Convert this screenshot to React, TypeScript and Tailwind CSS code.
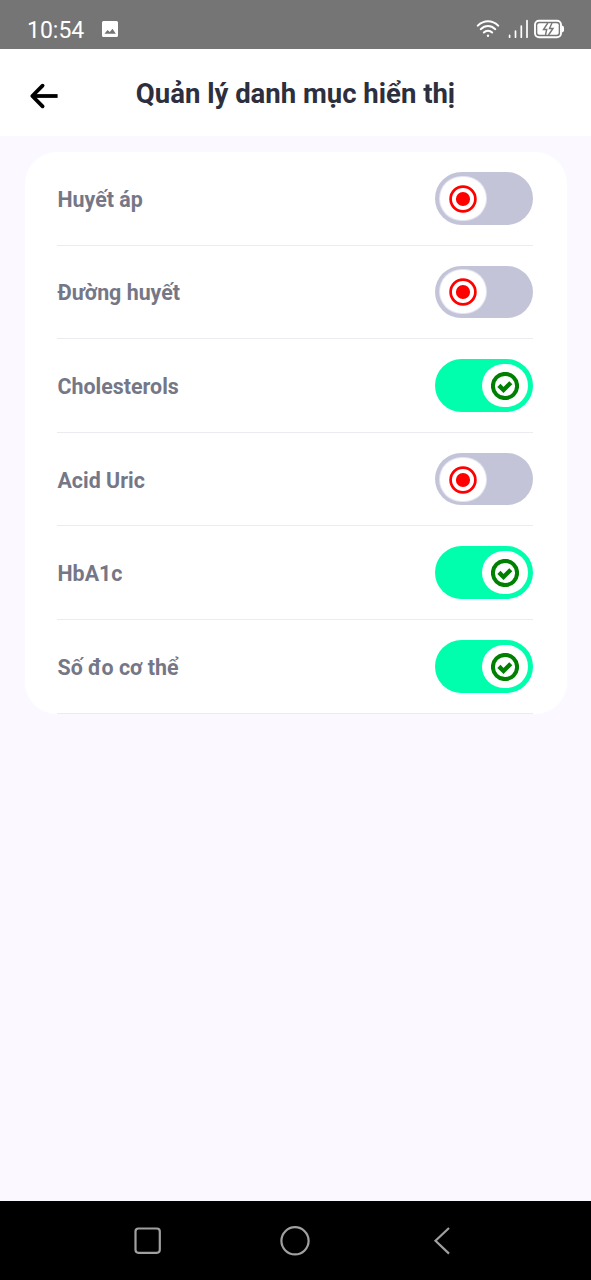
import { useState } from "react";

const initialItems = [
  { label: "Huyết áp", on: false },
  { label: "Đường huyết", on: false },
  { label: "Cholesterols", on: true },
  { label: "Acid Uric", on: false },
  { label: "HbA1c", on: true },
  { label: "Số đo cơ thể", on: true },
];

function StatusBar() {
  return (
    <div className="flex h-[49px] shrink-0 items-center justify-between bg-[#757575] pt-[9px] pr-[26px] pl-[27px] text-white">
      <div className="flex items-center gap-[18px]">
        <span className="mt-[3px] text-[23px] leading-[28px]">10:54</span>
        <svg className="h-[16px] w-[16px]" viewBox="0 0 16 16">
          <path
            fill="currentColor"
            fillRule="evenodd"
            d="M1.5 0h13Q16 0 16 1.5v13q0 1.500-1.500 1.500h-13Q0 16 0 14.500v-13Q0 0 1.500 0ZM2.500 12.800h11.300L10.500 7.700 7.800 11 5.500 9Z"
          />
        </svg>
      </div>
      <div className="flex items-center">
        <svg className="h-[20px] w-[24px]" viewBox="0 0 24 20" fill="none" stroke="currentColor" strokeWidth="1.900" strokeLinecap="round">
          <path d="M1.700 6.700Q6.500 2.300 12 2.300T22.300 6.700M4.700 10.200Q8 7 12 7T19.300 10.200M7.800 13.500Q9.600 11.700 12 11.700T16.200 13.500" />
          <circle cx="12" cy="16.700" r="1.200" fill="currentColor" stroke="none" />
        </svg>
        <svg className="ml-[8px] h-[20px] w-[20px]" viewBox="0 0 20 20" fill="none" stroke="currentColor" strokeWidth="1.700" strokeLinecap="round">
          <path d="M1.600 16.400v1.800M7.500 12v6.200M13.300 7v11.200M19 1.500v16.700" />
        </svg>
        <svg className="ml-[6px] h-[20px] w-[31px]" viewBox="0 0 31 20" fill="none">
          <rect x="1" y="1.800" width="26" height="16.400" rx="4" stroke="currentColor" strokeWidth="1.900" />
          <rect x="3.300" y="4.200" width="21.400" height="11.600" rx="2" fill="currentColor" />
          <path d="M28 6.500q2 .5 2 2v3q0 1.500-2 2Z" fill="currentColor" />
          <path d="M13.800 4 9.500 10.500h3.200L11.500 16M18 4l-2.500 5.500h3.500L14.500 16" stroke="#757575" strokeWidth="1.400" />
        </svg>
      </div>
    </div>
  );
}

function Header() {
  return (
    <header className="grid h-[87px] shrink-0 grid-cols-[1fr_auto_1fr] items-center bg-white">
      <button aria-label="Back" className="ml-[29px] mt-[7px] w-[30px]">
        <svg
          className="block h-[26px] w-[30px]"
          viewBox="0 0 30 26"
          fill="none"
          stroke="#000"
          strokeWidth="3.800"
          strokeLinejoin="round"
        >
          <path d="M28.600 13H4" />
          <path d="M13.600 2.700 3.300 13l10.300 10.300" strokeLinecap="round" />
        </svg>
      </button>
      <h1 className="mt-[3px] text-[27.500px] leading-[36px] font-bold whitespace-nowrap text-[#2d2f3e]">Quản lý danh mục hiển thị</h1>
    </header>
  );
}

function Toggle({ on, label, onClick }: { on: boolean; label: string; onClick: () => void }) {
  return (
    <button
      role="switch"
      aria-checked={on}
      aria-label={label}
      onClick={onClick}
      className={
        on
          ? "flex h-[52.500px] w-[98.300px] items-center justify-end rounded-full bg-[#00ffad] px-[5px]"
          : "flex h-[52.500px] w-[98.300px] items-center justify-start rounded-full bg-[#c4c4d8] px-[5px]"
      }
    >
      <span
        className={
          on
            ? "flex h-[43px] w-[46px] items-center justify-center rounded-full bg-white pt-[1px]"
            : "flex h-[43px] w-[46px] items-center justify-center rounded-full bg-white pt-[1px] shadow-[0_0_0_1px_#e4e4f4]"
        }
      >
        {on ? (
          <svg className="h-[28px] w-[28px]" viewBox="0 0 28 28" fill="none" stroke="#008000">
            <circle cx="14" cy="14" r="12.100" strokeWidth="4" />
            <path d="M7.900 13.400 12.500 18 19.800 10.700" strokeWidth="4.400" />
          </svg>
        ) : (
          <svg className="h-[28px] w-[28px]" viewBox="0 0 28 28">
            <circle cx="14" cy="14" r="12.400" fill="none" stroke="#ff0000" strokeWidth="2.700" />
            <circle cx="14" cy="14" r="7.100" fill="#ff0000" />
          </svg>
        )}
      </span>
    </button>
  );
}

function NavBar() {
  return (
    <nav className="flex h-[79px] shrink-0 items-center justify-center gap-[117px] bg-black pr-[2px] text-[#a0a0a0]">
      <svg className="h-[30px] w-[30px]" viewBox="0 0 30 30" fill="none" stroke="currentColor" strokeWidth="2.200">
        <rect x="2.500" y="2.500" width="24.300" height="24.300" rx="3" />
      </svg>
      <svg className="h-[30px] w-[30px]" viewBox="0 0 30 30" fill="none" stroke="currentColor" strokeWidth="2.200">
        <circle cx="15" cy="14.800" r="13.600" />
      </svg>
      <svg className="h-[30px] w-[30px]" viewBox="0 0 30 30" fill="none" stroke="currentColor" strokeWidth="2.200">
        <path d="M22 2 8.500 14.800 22 27.600" />
      </svg>
    </nav>
  );
}

export default function App() {
  const [items, setItems] = useState(initialItems);
  const toggle = (index: number) =>
    setItems(items.map((item, i) => (i === index ? { ...item, on: !item.on } : item)));

  return (
    <div className="flex h-[1280px] w-[591px] flex-col bg-[#fbf9ff] font-['Roboto',sans-serif]">
      <StatusBar />
      <Header />
      <main className="flex-1 pt-[16px] pr-[24.500px] pl-[25px]">
        <ul className="rounded-[32px] bg-white pr-[33.200px] pl-[32px]">
          {items.map((item, i) => (
            <li key={item.label} className="flex h-[93.600px] items-center justify-between border-b border-[#ebebf0]">
              <span className="mt-[3px] pl-[0.500px] text-[21.400px] leading-[30px] font-bold text-[#757787]">{item.label}</span>
              <Toggle on={item.on} label={item.label} onClick={() => toggle(i)} />
            </li>
          ))}
        </ul>
      </main>
      <NavBar />
    </div>
  );
}
